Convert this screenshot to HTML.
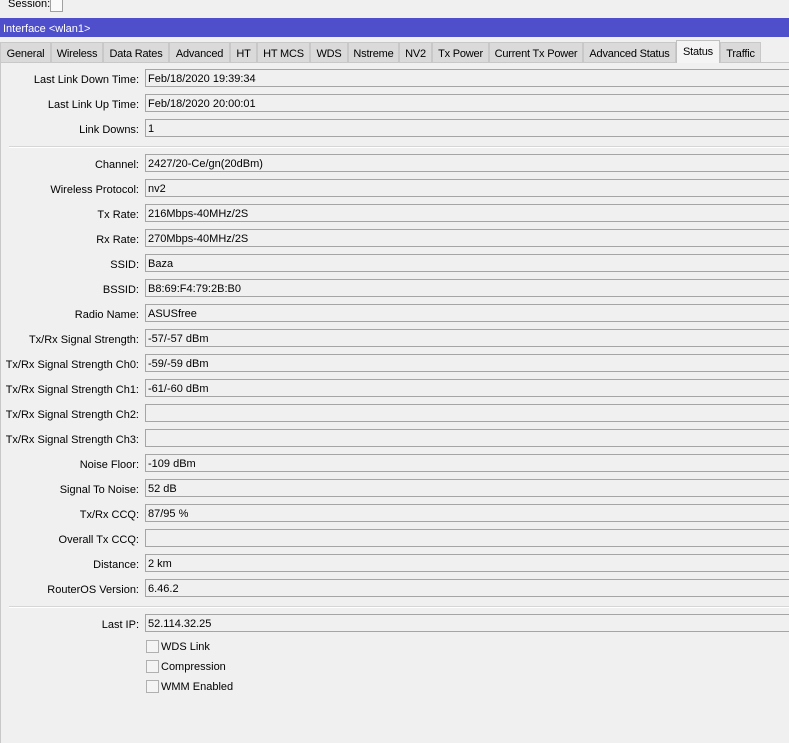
<!DOCTYPE html>
<html><head><style>
body{margin:0;width:789px;height:743px;background:#f0f0f0;font-family:"Liberation Sans",sans-serif;font-size:11px;color:#000;position:relative;overflow:hidden}
div{white-space:nowrap}
.a{position:absolute}
.title{left:0;top:18px;width:789px;height:19px;background:#4f4fcc;color:#fff;line-height:22px;text-indent:3px}
.tab{position:absolute;top:42px;height:20px;line-height:22px;background:#dadada;border:1px solid #c8c8c8;border-bottom:none;box-sizing:border-box;text-align:center;letter-spacing:-0.2px}
.tab.on{top:40px;height:23px;background:#f4f4f4;line-height:23px;border-color:#c0c0c0}
.lbl{position:absolute;right:650px;text-align:right;margin-top:2px}
.box{position:absolute;left:145px;width:650px;height:18px;border:1px solid #a5a5a5;border-right:none;box-sizing:border-box;line-height:15px;padding-top:2px;padding-left:2px;background:#f0f0f0}
.sep{position:absolute;left:9px;width:780px;height:1px;background:#d6d6d6;border-bottom:1px solid #fff}
.cb{position:absolute;left:146px;width:11px;height:11px;border:1px solid #b0b0b0;background:#f4f4f4}
</style></head><body>
<div class="a" style="left:8px;top:-2px">Session:</div>
<div class="a" style="left:50px;top:-2px;width:11px;height:13px;border:1px solid #a0a0a0;border-top:none;background:#fafafa"></div>
<div class="a title">Interface &lt;wlan1&gt;</div>
<div class="a" style="left:0;top:62px;width:789px;height:1px;background:#c8c8c8"></div>
<div class="tab" style="left:0;width:51px">General</div>
<div class="tab" style="left:51px;width:52px">Wireless</div>
<div class="tab" style="left:103px;width:66px">Data Rates</div>
<div class="tab" style="left:169px;width:61px">Advanced</div>
<div class="tab" style="left:230px;width:27px">HT</div>
<div class="tab" style="left:257px;width:53px">HT MCS</div>
<div class="tab" style="left:310px;width:38px">WDS</div>
<div class="tab" style="left:348px;width:51px">Nstreme</div>
<div class="tab" style="left:399px;width:33px">NV2</div>
<div class="tab" style="left:432px;width:57px">Tx Power</div>
<div class="tab" style="left:489px;width:94px">Current Tx Power</div>
<div class="tab" style="left:583px;width:93px">Advanced Status</div>
<div class="tab on" style="left:676px;width:44px">Status</div>
<div class="tab" style="left:720px;width:41px">Traffic</div>
<div class="a" style="left:0;top:63px;width:1px;height:680px;background:#c8c8c8"></div>

<div class="lbl" style="top:72px">Last Link Down Time:</div><div class="box" style="top:69px">Feb/18/2020 19:39:34</div>
<div class="lbl" style="top:97px">Last Link Up Time:</div><div class="box" style="top:94px">Feb/18/2020 20:00:01</div>
<div class="lbl" style="top:122px">Link Downs:</div><div class="box" style="top:119px">1</div>
<div class="sep" style="top:146px"></div>
<div class="lbl" style="top:157px">Channel:</div><div class="box" style="top:154px">2427/20-Ce/gn(20dBm)</div>
<div class="lbl" style="top:182px">Wireless Protocol:</div><div class="box" style="top:179px">nv2</div>
<div class="lbl" style="top:207px">Tx Rate:</div><div class="box" style="top:204px">216Mbps-40MHz/2S</div>
<div class="lbl" style="top:232px">Rx Rate:</div><div class="box" style="top:229px">270Mbps-40MHz/2S</div>
<div class="lbl" style="top:257px">SSID:</div><div class="box" style="top:254px">Baza</div>
<div class="lbl" style="top:282px">BSSID:</div><div class="box" style="top:279px">B8:69:F4:79:2B:B0</div>
<div class="lbl" style="top:307px">Radio Name:</div><div class="box" style="top:304px">ASUSfree</div>
<div class="lbl" style="top:332px">Tx/Rx Signal Strength:</div><div class="box" style="top:329px">-57/-57 dBm</div>
<div class="lbl" style="top:357px">Tx/Rx Signal Strength Ch0:</div><div class="box" style="top:354px">-59/-59 dBm</div>
<div class="lbl" style="top:382px">Tx/Rx Signal Strength Ch1:</div><div class="box" style="top:379px">-61/-60 dBm</div>
<div class="lbl" style="top:407px">Tx/Rx Signal Strength Ch2:</div><div class="box" style="top:404px"></div>
<div class="lbl" style="top:432px">Tx/Rx Signal Strength Ch3:</div><div class="box" style="top:429px"></div>
<div class="lbl" style="top:457px">Noise Floor:</div><div class="box" style="top:454px">-109 dBm</div>
<div class="lbl" style="top:482px">Signal To Noise:</div><div class="box" style="top:479px">52 dB</div>
<div class="lbl" style="top:507px">Tx/Rx CCQ:</div><div class="box" style="top:504px">87/95 %</div>
<div class="lbl" style="top:532px">Overall Tx CCQ:</div><div class="box" style="top:529px"></div>
<div class="lbl" style="top:557px">Distance:</div><div class="box" style="top:554px">2 km</div>
<div class="lbl" style="top:582px">RouterOS Version:</div><div class="box" style="top:579px">6.46.2</div>
<div class="sep" style="top:606px"></div>
<div class="lbl" style="top:617px">Last IP:</div><div class="box" style="top:614px">52.114.32.25</div>
<div class="cb" style="top:640px"></div><div class="a" style="left:161px;top:641px">WDS Link</div>
<div class="cb" style="top:660px"></div><div class="a" style="left:161px;top:661px">Compression</div>
<div class="cb" style="top:680px"></div><div class="a" style="left:161px;top:681px">WMM Enabled</div>
</body></html>
